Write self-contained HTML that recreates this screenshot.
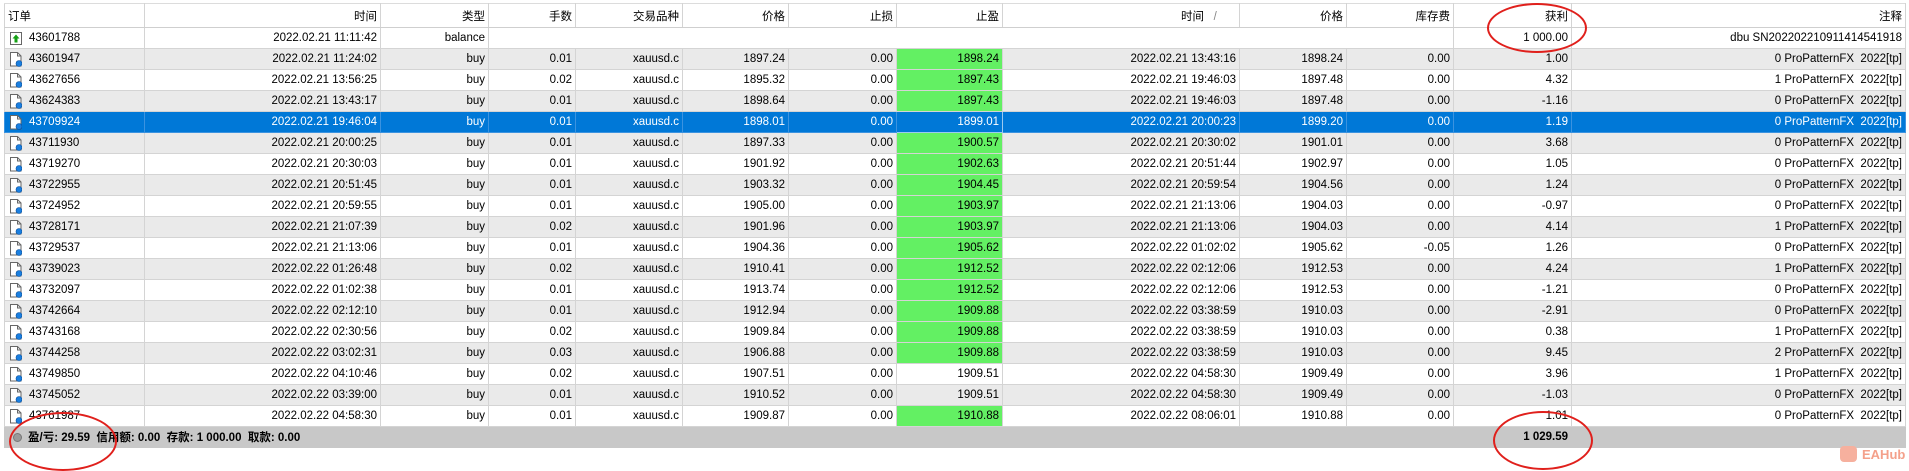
<!DOCTYPE html>
<html><head><meta charset="utf-8"><style>
body{margin:0;width:1909px;height:470px;background:#fff;overflow:hidden;position:relative;font-family:"Liberation Sans","Noto Sans CJK SC",sans-serif;font-size:11.5px;color:#000}
table{position:absolute;left:4px;top:3px;border-collapse:collapse;table-layout:fixed;width:1901px}
td,th{height:20px;padding:0 3px;border:1px solid #d4d4d4;border-top:none;text-align:right;white-space:pre;overflow:hidden;font-weight:normal}
th{height:23px;background:#fff;border-bottom:1px solid #cfcfcf;border-top:1px solid #dcdcdc}
tr.g td{background:#eaeaea}
tr.s td{background:#0078d7;color:#fff;border-color:#3b93e0}
td.t{background:#63f063!important}
tr.s td.t{background:#0078d7!important;border:1px solid #9ccaf0}
td.o{text-align:left;padding-left:24px;position:relative}
td.o svg{position:absolute;left:5px;top:3px}
th.l{text-align:left}
tr.f td{background:#c8c8c8;border-color:#c8c8c8;font-weight:bold;height:20px}
.e{position:absolute;border:2px solid #e0201c;border-radius:50%}
</style></head><body>
<svg width="0" height="0" style="position:absolute"><defs>
<symbol id="d" viewBox="0 0 12 15"><path d="M0.5 0.5h7l3.5 3.5v10h-10.5z" fill="#fff" stroke="#666"/><path d="M7.5 0.5v3.5h3.5" fill="none" stroke="#666"/><circle cx="9" cy="11.5" r="3" fill="#1a7fe0" stroke="#0a4f9a" stroke-width=".6"/></symbol>
<symbol id="b" viewBox="0 0 12 15"><rect x="0.5" y="1.5" width="11" height="12" fill="#fff" stroke="#666"/><path d="M6 3.5l3.5 4h-2v4h-3v-4h-2z" fill="#14a014"/></symbol>
</defs></svg>
<table>
<colgroup><col style="width:140px"><col style="width:236px"><col style="width:108px"><col style="width:87px"><col style="width:107px"><col style="width:106px"><col style="width:108px"><col style="width:106px"><col style="width:237px"><col style="width:107px"><col style="width:107px"><col style="width:118px"><col style="width:334px"></colgroup>
<tr><th class="l">订单</th><th>时间</th><th>类型</th><th>手数</th><th>交易品种</th><th>价格</th><th>止损</th><th>止盈</th><th>时间   <span style="color:#888">/</span>      </th><th>价格</th><th>库存费</th><th>获利</th><th>注释</th></tr>
<tr><td class="o"><svg width="12" height="15"><use href="#b"/></svg>43601788</td><td>2022.02.21 11:11:42</td><td>balance</td><td style="border-right:none"></td><td style="border-left:none;border-right:none"></td><td style="border-left:none;border-right:none"></td><td style="border-left:none;border-right:none"></td><td style="border-left:none;border-right:none"></td><td style="border-left:none;border-right:none"></td><td style="border-left:none;border-right:none"></td><td style="border-left:none"></td><td>1 000.00</td><td>dbu SN202202210911414541918</td></tr>
<tr class="g"><td class="o"><svg width="12" height="15"><use href="#d"/></svg>43601947</td><td>2022.02.21 11:24:02</td><td>buy</td><td>0.01</td><td>xauusd.c</td><td>1897.24</td><td>0.00</td><td class="t">1898.24</td><td>2022.02.21 13:43:16</td><td>1898.24</td><td>0.00</td><td>1.00</td><td>0 ProPatternFX  2022[tp]</td></tr>
<tr><td class="o"><svg width="12" height="15"><use href="#d"/></svg>43627656</td><td>2022.02.21 13:56:25</td><td>buy</td><td>0.02</td><td>xauusd.c</td><td>1895.32</td><td>0.00</td><td class="t">1897.43</td><td>2022.02.21 19:46:03</td><td>1897.48</td><td>0.00</td><td>4.32</td><td>1 ProPatternFX  2022[tp]</td></tr>
<tr class="g"><td class="o"><svg width="12" height="15"><use href="#d"/></svg>43624383</td><td>2022.02.21 13:43:17</td><td>buy</td><td>0.01</td><td>xauusd.c</td><td>1898.64</td><td>0.00</td><td class="t">1897.43</td><td>2022.02.21 19:46:03</td><td>1897.48</td><td>0.00</td><td>-1.16</td><td>0 ProPatternFX  2022[tp]</td></tr>
<tr class="s"><td class="o"><svg width="12" height="15"><use href="#d"/></svg>43709924</td><td>2022.02.21 19:46:04</td><td>buy</td><td>0.01</td><td>xauusd.c</td><td>1898.01</td><td>0.00</td><td class="t">1899.01</td><td>2022.02.21 20:00:23</td><td>1899.20</td><td>0.00</td><td>1.19</td><td>0 ProPatternFX  2022[tp]</td></tr>
<tr class="g"><td class="o"><svg width="12" height="15"><use href="#d"/></svg>43711930</td><td>2022.02.21 20:00:25</td><td>buy</td><td>0.01</td><td>xauusd.c</td><td>1897.33</td><td>0.00</td><td class="t">1900.57</td><td>2022.02.21 20:30:02</td><td>1901.01</td><td>0.00</td><td>3.68</td><td>0 ProPatternFX  2022[tp]</td></tr>
<tr><td class="o"><svg width="12" height="15"><use href="#d"/></svg>43719270</td><td>2022.02.21 20:30:03</td><td>buy</td><td>0.01</td><td>xauusd.c</td><td>1901.92</td><td>0.00</td><td class="t">1902.63</td><td>2022.02.21 20:51:44</td><td>1902.97</td><td>0.00</td><td>1.05</td><td>0 ProPatternFX  2022[tp]</td></tr>
<tr class="g"><td class="o"><svg width="12" height="15"><use href="#d"/></svg>43722955</td><td>2022.02.21 20:51:45</td><td>buy</td><td>0.01</td><td>xauusd.c</td><td>1903.32</td><td>0.00</td><td class="t">1904.45</td><td>2022.02.21 20:59:54</td><td>1904.56</td><td>0.00</td><td>1.24</td><td>0 ProPatternFX  2022[tp]</td></tr>
<tr><td class="o"><svg width="12" height="15"><use href="#d"/></svg>43724952</td><td>2022.02.21 20:59:55</td><td>buy</td><td>0.01</td><td>xauusd.c</td><td>1905.00</td><td>0.00</td><td class="t">1903.97</td><td>2022.02.21 21:13:06</td><td>1904.03</td><td>0.00</td><td>-0.97</td><td>0 ProPatternFX  2022[tp]</td></tr>
<tr class="g"><td class="o"><svg width="12" height="15"><use href="#d"/></svg>43728171</td><td>2022.02.21 21:07:39</td><td>buy</td><td>0.02</td><td>xauusd.c</td><td>1901.96</td><td>0.00</td><td class="t">1903.97</td><td>2022.02.21 21:13:06</td><td>1904.03</td><td>0.00</td><td>4.14</td><td>1 ProPatternFX  2022[tp]</td></tr>
<tr><td class="o"><svg width="12" height="15"><use href="#d"/></svg>43729537</td><td>2022.02.21 21:13:06</td><td>buy</td><td>0.01</td><td>xauusd.c</td><td>1904.36</td><td>0.00</td><td class="t">1905.62</td><td>2022.02.22 01:02:02</td><td>1905.62</td><td>-0.05</td><td>1.26</td><td>0 ProPatternFX  2022[tp]</td></tr>
<tr class="g"><td class="o"><svg width="12" height="15"><use href="#d"/></svg>43739023</td><td>2022.02.22 01:26:48</td><td>buy</td><td>0.02</td><td>xauusd.c</td><td>1910.41</td><td>0.00</td><td class="t">1912.52</td><td>2022.02.22 02:12:06</td><td>1912.53</td><td>0.00</td><td>4.24</td><td>1 ProPatternFX  2022[tp]</td></tr>
<tr><td class="o"><svg width="12" height="15"><use href="#d"/></svg>43732097</td><td>2022.02.22 01:02:38</td><td>buy</td><td>0.01</td><td>xauusd.c</td><td>1913.74</td><td>0.00</td><td class="t">1912.52</td><td>2022.02.22 02:12:06</td><td>1912.53</td><td>0.00</td><td>-1.21</td><td>0 ProPatternFX  2022[tp]</td></tr>
<tr class="g"><td class="o"><svg width="12" height="15"><use href="#d"/></svg>43742664</td><td>2022.02.22 02:12:10</td><td>buy</td><td>0.01</td><td>xauusd.c</td><td>1912.94</td><td>0.00</td><td class="t">1909.88</td><td>2022.02.22 03:38:59</td><td>1910.03</td><td>0.00</td><td>-2.91</td><td>0 ProPatternFX  2022[tp]</td></tr>
<tr><td class="o"><svg width="12" height="15"><use href="#d"/></svg>43743168</td><td>2022.02.22 02:30:56</td><td>buy</td><td>0.02</td><td>xauusd.c</td><td>1909.84</td><td>0.00</td><td class="t">1909.88</td><td>2022.02.22 03:38:59</td><td>1910.03</td><td>0.00</td><td>0.38</td><td>1 ProPatternFX  2022[tp]</td></tr>
<tr class="g"><td class="o"><svg width="12" height="15"><use href="#d"/></svg>43744258</td><td>2022.02.22 03:02:31</td><td>buy</td><td>0.03</td><td>xauusd.c</td><td>1906.88</td><td>0.00</td><td class="t">1909.88</td><td>2022.02.22 03:38:59</td><td>1910.03</td><td>0.00</td><td>9.45</td><td>2 ProPatternFX  2022[tp]</td></tr>
<tr><td class="o"><svg width="12" height="15"><use href="#d"/></svg>43749850</td><td>2022.02.22 04:10:46</td><td>buy</td><td>0.02</td><td>xauusd.c</td><td>1907.51</td><td>0.00</td><td>1909.51</td><td>2022.02.22 04:58:30</td><td>1909.49</td><td>0.00</td><td>3.96</td><td>1 ProPatternFX  2022[tp]</td></tr>
<tr class="g"><td class="o"><svg width="12" height="15"><use href="#d"/></svg>43745052</td><td>2022.02.22 03:39:00</td><td>buy</td><td>0.01</td><td>xauusd.c</td><td>1910.52</td><td>0.00</td><td>1909.51</td><td>2022.02.22 04:58:30</td><td>1909.49</td><td>0.00</td><td>-1.03</td><td>0 ProPatternFX  2022[tp]</td></tr>
<tr><td class="o"><svg width="12" height="15"><use href="#d"/></svg>43761987</td><td>2022.02.22 04:58:30</td><td>buy</td><td>0.01</td><td>xauusd.c</td><td>1909.87</td><td>0.00</td><td class="t">1910.88</td><td>2022.02.22 08:06:01</td><td>1910.88</td><td>0.00</td><td>1.01</td><td>0 ProPatternFX  2022[tp]</td></tr>
<tr class="f"><td colspan="11" style="text-align:left;padding-left:8px"><span style="display:inline-block;width:7px;height:7px;border-radius:50%;background:#999;border:1px solid #777;margin-right:6px;vertical-align:-1px"></span>盈/亏: 29.59  信用额: 0.00  存款: 1 000.00  取款: 0.00</td><td>1 029.59</td><td></td></tr>
</table>
<div class="e" style="left:1487px;top:3px;width:96px;height:46px"></div>
<div class="e" style="left:9px;top:412px;width:104px;height:55px"></div>
<div class="e" style="left:1493px;top:411px;width:96px;height:55px"></div>
<div style="position:absolute;left:1840px;top:446px;font:bold 13px 'Liberation Sans',sans-serif;color:#f4a08a"><span style="display:inline-block;width:17px;height:16px;background:#f6b09e;border-radius:4px;vertical-align:-3px;margin-right:5px"></span>EAHub</div>
</body></html>
